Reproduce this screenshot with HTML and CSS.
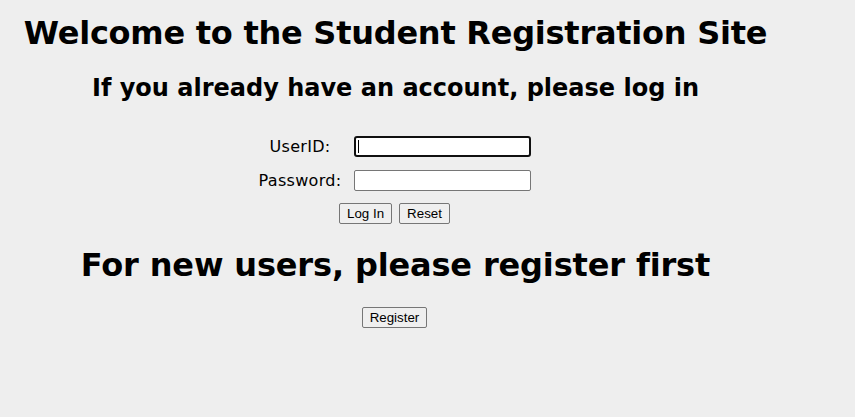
FILE: index.html
```html
<!DOCTYPE html>
<html>
<head>
<meta charset="utf-8">
<title>Student Registration</title>
<link rel="stylesheet" href="styles.css">
</head>
<body>
<div class="page">
  <h1 class="title">Welcome to the Student Registration Site</h1>
  <h2 class="subtitle">If you already have an account, please log in</h2>
  <form class="login">
    <div class="row">
      <label class="lbl">UserID:</label>
      <span class="field-wrap"><input class="field focused" type="text"><span class="caret"></span></span>
    </div>
    <div class="row">
      <label class="lbl">Password:</label>
      <span class="field-wrap"><input class="field" type="password"></span>
    </div>
    <div class="buttons">
      <button type="button" class="btn">Log In</button>
      <button type="button" class="btn">Reset</button>
    </div>
  </form>
  <h1 class="title new">For new users, please register first</h1>
  <div class="buttons reg">
    <button type="button" class="btn">Register</button>
  </div>
</div>
</body>
</html>
```

FILE: styles.css
```css
html, body {
  background: #eeeeee;
}
body {
  margin: 8px;
  font-family: "DejaVu Sans", Verdana, sans-serif;
  color: #000;
}
.page {
  width: 775px;
  padding-top: 7px;
  text-align: center;
}
.title {
  font-size: 32px;
  font-weight: bold;
  letter-spacing: -0.25px;
  margin: 0;
  line-height: 37px;
}
.subtitle {
  font-size: 24px;
  font-weight: bold;
  margin: 22px 0 0 0;
  line-height: 28px;
}
.login {
  margin: 34px 0 0 0;
  display: flex;
  flex-direction: column;
  align-items: center;
  gap: 13px;
}
.row {
  display: grid;
  grid-template-columns: 100px 177px;
  column-gap: 4px;
  align-items: center;
  height: 21px;
  margin-right: 10px;
}
.lbl {
  font-size: 16px;
  letter-spacing: 0.3px;
  line-height: 19px;
  text-align: center;
}
.field-wrap {
  position: relative;
  display: block;
  height: 21px;
}
.field {
  box-sizing: border-box;
  width: 177px;
  height: 21px;
  border: 1px solid #767676;
  border-radius: 2px;
  background: #fff;
  margin: 0;
  padding: 1px 2px;
  display: block;
}
.field.focused {
  border: 2px solid #101010;
  border-radius: 3px;
}
.caret {
  position: absolute;
  left: 4px;
  top: 4px;
  width: 1px;
  height: 13px;
  background: #000;
}
.buttons {
  display: flex;
  justify-content: center;
  gap: 7px;
}
.login .buttons {
  margin-top: -1px;
  margin-right: 2px;
}
.btn {
  box-sizing: border-box;
  font-family: "Liberation Sans", Arial, sans-serif;
  font-size: 13.33px;
  background: #efefef;
  border: 1px solid #767676;
  border-radius: 2px;
  padding: 1px 7px;
  height: 21px;
  color: #000;
  margin: 0;
}
.title.new {
  margin-top: 23px;
  letter-spacing: -0.15px;
}
.reg {
  margin-top: 23px;
  margin-right: 2px;
}
```
